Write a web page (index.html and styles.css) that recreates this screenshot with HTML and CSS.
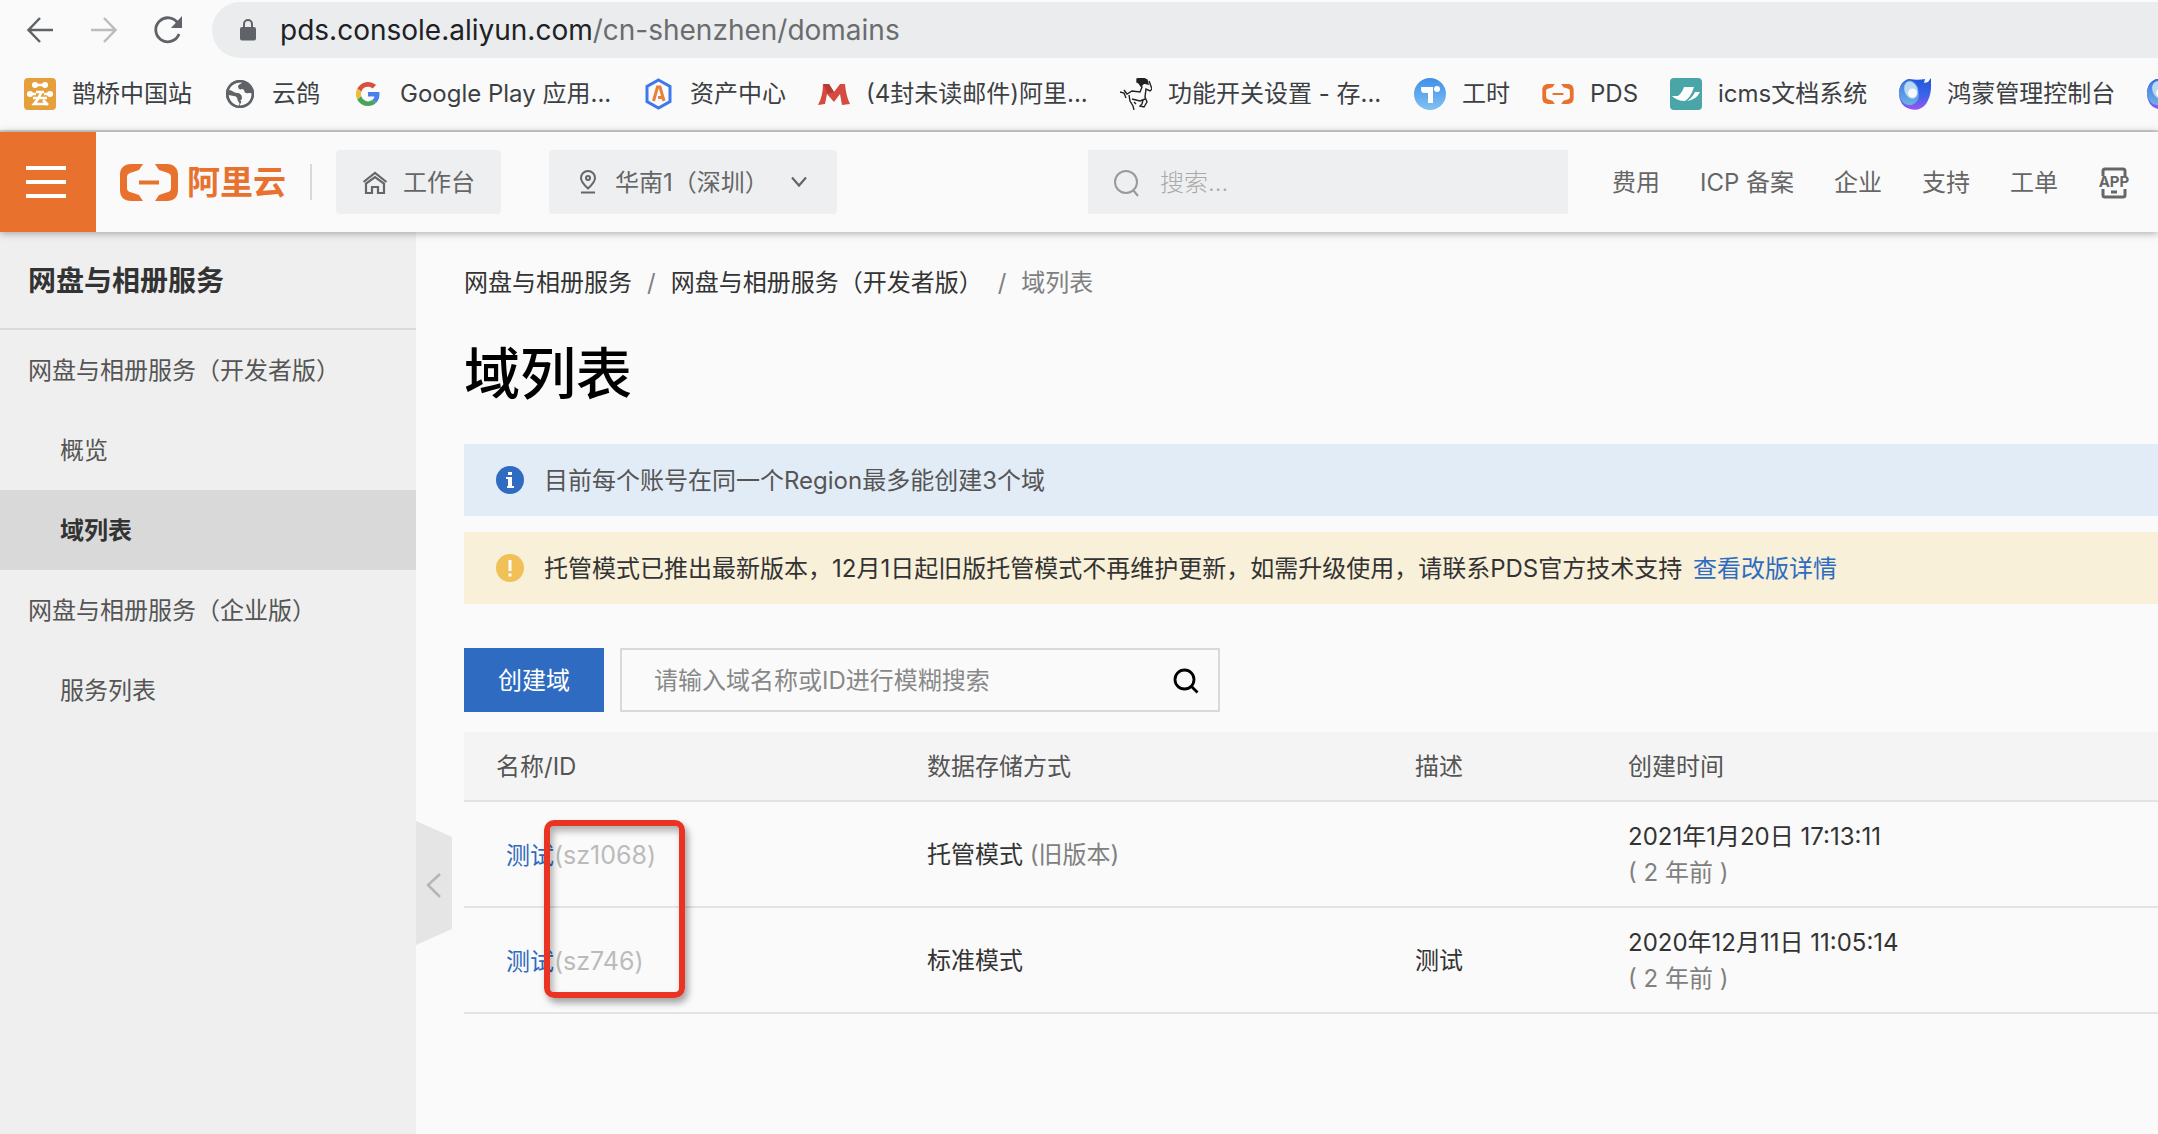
FILE: index.html
```html
<!DOCTYPE html>
<html lang="zh-CN">
<head>
<meta charset="utf-8">
<title>域列表</title>
<link rel="stylesheet" href="styles.css">
</head>
<body>
<svg class="defs" aria-hidden="true">
  <defs>
    <linearGradient id="drop-body" x1="0" y1="0" x2="0" y2="1">
      <stop offset="0" stop-color="#1f57dc"/><stop offset=".55" stop-color="#3f62ea"/><stop offset="1" stop-color="#9a55f3"/>
    </linearGradient>
    <linearGradient id="drop-ring" x1="0" y1="0" x2="0" y2="1">
      <stop offset="0" stop-color="#3f78e4"/><stop offset="1" stop-color="#6cb2e4"/>
    </linearGradient>
    <linearGradient id="teambition" x1="0" y1="0" x2="0" y2="1">
      <stop offset="0" stop-color="#3f8fe8"/><stop offset="1" stop-color="#82c2f3"/>
    </linearGradient>
    <symbol id="bracket" viewBox="0 0 58 37">
      <path d="M23 0H11C4 0 0 4 0 11v15c0 7 4 11 11 11h12l-4-6-9-3q-3-1-3-4V13q0-3 3-4l9-3zM35 0h12c7 0 11 4 11 11v15c0 7-4 11-11 11H35l4-6 9-3q3-1 3-4V13q0-3-3-4l-9-3zM19 16.500h20v4H19z" fill="#e8712e"/>
    </symbol>
    <symbol id="drop" viewBox="0 0 32 32">
      <path d="M10 1c6 1 11 1 16 0l-1 4 4-1 3-4c1 12-1 20-5 26-4 5-10 7-16 5C3 29 0 22 0 15 0 8 4 2 10 1z" fill="url(#drop-body)"/>
      <path d="M9 2C3 4 0 10 0 16c1 6 4 10 9 11 6 1 11-4 11-10C20 8 16 2 9 2z" fill="url(#drop-ring)"/>
      <ellipse cx="12" cy="12" rx="6.500" ry="9" transform="rotate(-20 12 12)" fill="#b9d9f3"/>
      <circle cx="13.500" cy="15" r="4.500" fill="#f7fbff"/>
    </symbol>
  </defs>
</svg>

<div class="browser">
  <div class="toolbar">
    <button class="tool" aria-label="后退"><svg width="28" height="28" viewBox="0 0 28 28" fill="none" stroke="#5f6368" stroke-width="2.500"><path d="M27 14H3M14 2 2.500 14 14 26"/></svg></button>
    <button class="tool" aria-label="前进"><svg width="28" height="28" viewBox="0 0 28 28" fill="none" stroke="#babcbe" stroke-width="2.500"><path d="M1 14h24M14 2l11.500 12L14 26"/></svg></button>
    <button class="tool" aria-label="重新加载"><svg width="28" height="28" viewBox="0 0 28 28"><path d="M24 7.500A12 12 0 1 0 25 18" fill="none" stroke="#5f6368" stroke-width="2.800"/><path d="M28 0v12H17z" fill="#5f6368"/></svg></button>
    <div class="address">
      <svg width="16" height="22" viewBox="0 0 16 22"><rect y="8" width="16" height="13.500" rx="2" fill="#5f6368"/><path d="M4 9V5a4 4 0 0 1 8 0v4" fill="none" stroke="#5f6368" stroke-width="2"/></svg>
      <span class="url"><span class="host">pds.console.aliyun.com</span>/cn-shenzhen/domains</span>
    </div>
  </div>
  <nav class="bookmarks" aria-label="书签">
    <a href="#"><svg width="32" height="32" viewBox="0 0 32 32"><rect width="32" height="32" rx="4" fill="#e5a03c"/><g fill="#fff"><circle cx="11" cy="7" r="3"/><circle cx="21" cy="7" r="3"/><circle cx="6" cy="16" r="3"/><circle cx="26" cy="16" r="3"/></g><g stroke="#fff" stroke-width="2.600" fill="none"><path d="M11 7h10M3 16h9M20 16h9M9 20h14M12 14h8M17 15l-3 6-4 5h12M19 22l5 5"/></g></svg><span>鹊桥中国站</span></a>
    <a href="#"><svg width="32" height="32" viewBox="0 0 32 32"><circle cx="16" cy="16" r="14" fill="#5f6368"/><path d="M19 4c-2 2-4 2-5 4 0 3 2 4 4 3 3 0 2 4 4 4 3 1 5-1 6 1 0 4-2 8-6 10l-6 2c-1-2 2-3 1-5-1-1-4-1-4-3 0-3-2-3-5-4l-4-1C4 9 10 4 19 4z" fill="#fafafa"/><path d="M21 6c2 1 3 3 2 5l3 3 3-1c-1-4-4-7-8-9zM5 12c3 0 5 3 8 3s5 2 5 5-3 2-4 4l1 5C8 28 4 22 3 17z" fill="#5f6368"/><path d="M4.500 17l5 1c3 0 4 2 4 4 0 1 2 2 2 4l-1 2.500A13 13 0 0 1 4.500 17z" fill="#fafafa"/><circle cx="16" cy="16" r="12.800" fill="none" stroke="#5f6368" stroke-width="2.500"/></svg><span>云鸽</span></a>
    <a href="#"><svg width="32" height="32" viewBox="-8 -8 64 64"><path fill="#d8503f" d="M24 9.500c3.500 0 6.700 1.200 9.200 3.600l6.900-6.900A24 24 0 0 0 2.600 13.200l8 6.200A14.300 14.300 0 0 1 24 9.500z"/><path fill="#4a80ea" d="M47 24.500c0-1.600-.2-3.100-.4-4.500H24v9h12.900a11 11 0 0 1-4.700 7.200l7.700 6c4.500-4.200 7.100-10.400 7.100-17.700z"/><path fill="#efbb3a" d="M10.500 28.600a14.500 14.500 0 0 1 0-9.200l-8-6.200a24 24 0 0 0 0 21.600z"/><path fill="#4ba558" d="M24 48c6.500 0 11.900-2.100 15.900-5.800l-7.700-6a14.300 14.300 0 0 1-21.700-7.600l-8 6.200A24 24 0 0 0 24 48z"/></svg><span class="label-s">Google Play 应用...</span></a>
    <a href="#"><svg width="32" height="32" viewBox="0 0 32 32" fill="none"><path d="M16.500 2 28 8.500v15L16.500 30 5 23.500v-15z" stroke="#3f78ec" stroke-width="3"/><path d="M11.500 23 15.500 9h2.500l4 14M16 19.500h5" stroke="#e8803c" stroke-width="3"/></svg><span>资产中心</span></a>
    <a href="#"><svg width="32" height="32" viewBox="0 0 32 32"><path d="M5 6h6l5 8 6-8h5q1 12 5 20l-8 1-2-11-6 8-7-8-2 10-7 1Q5 18 5 6z" fill="#d44c41"/><path d="M5 6h6l5 8-6 2z" fill="#b93c34"/></svg><span class="label-l">(4封未读邮件)阿里...</span></a>
    <a href="#"><svg width="32" height="32" viewBox="0 0 32 32" fill="none" stroke="#222" stroke-width="1.400"><path d="M0 14l4 1 2 5M4 12l3 4 5-3 8 1 2-5-2-3M29 3l3 8-2 2-4-2-1 8 2 5-3 5-4-1 2-2 1-4M9 17l1 6 3 5 1 4M12 21l8 2 5-2M14 24l2 2"/><path d="M17 1l6-1 4 2 1 4-4-1-3 3-2-3-2-1z" fill="#222"/></svg><span class="label-m">功能开关设置 - 存...</span></a>
    <a href="#"><svg width="32" height="32" viewBox="0 0 32 32"><circle cx="16" cy="16" r="16" fill="url(#teambition)"/><path d="M7 9h12v16h-5V15H10q-3 0-3-4z" fill="#fff"/><circle cx="23" cy="11" r="3" fill="#fff"/></svg><span>工时</span></a>
    <a href="#"><svg width="32" height="20"><use href="#bracket"/></svg><span>PDS</span></a>
    <a href="#"><svg width="32" height="32" viewBox="0 0 32 32"><rect width="32" height="32" rx="4" fill="#4aa5a8"/><path d="M14 9h10q-3 10-9 14-8 0-13-5h6q4-3 6-9zM25 14h5q-4 8-13 9 5-3 8-9z" fill="#fff"/><path d="M25 10q-3 9-9 13" stroke="#4aa5a8" fill="none"/></svg><span>icms文档系统</span></a>
    <a href="#"><svg width="32" height="32"><use href="#drop"/></svg><span>鸿蒙管理控制台</span></a>
    <a href="#" aria-label="更多书签"><svg width="32" height="32"><use href="#drop"/></svg></a>
  </nav>
</div>

<header class="header">
  <button class="menu" aria-label="菜单"><i></i><i></i><i></i></button>
  <a class="logo" href="#"><svg width="58" height="37"><use href="#bracket"/></svg><span>阿里云</span></a>
  <i class="divider"></i>
  <button class="workbench"><svg width="26" height="24" viewBox="0 0 26 24" fill="none" stroke="#666" stroke-width="2.200"><path d="M1.500 11 13 2l11.500 9"/><path d="M4 12.500V22h6v-6h6v6h6v-9.500L13 6z"/></svg>工作台</button>
  <div class="region">
    <svg class="pin" width="18" height="24" viewBox="0 0 18 24" fill="none" stroke="#666" stroke-width="2"><path d="M9 18.500C4 14 2 11 2 8a7 7 0 0 1 14 0c0 3-2 6-7 10.500z"/><circle cx="9" cy="8" r="2"/><path d="M2 22.500h14"/></svg>
    <select aria-label="地域"><option>华南1（深圳）</option></select>
    <svg class="chevron" width="16" height="12" viewBox="0 0 16 12" fill="none" stroke="#666" stroke-width="2.200"><path d="M1 1.500l7 8 7-8"/></svg>
  </div>
  <div class="search">
    <svg width="26" height="28" viewBox="0 0 26 28" fill="none" stroke="#999" stroke-width="2"><circle cx="12" cy="13" r="11"/><path d="M19 21l5 6"/></svg>
    <input type="search" aria-label="搜索" placeholder="搜索...">
  </div>
  <nav class="links" aria-label="导航">
    <a href="#">费用</a><a href="#">ICP 备案</a><a href="#">企业</a><a href="#">支持</a><a href="#">工单</a>
    <a href="#" aria-label="APP"><svg width="32" height="32" viewBox="0 0 32 32" fill="none" stroke="#666" stroke-width="3"><path d="M5 9V4q0-2 2-2h18q2 0 2 2v5M5 22v6q0 2 2 2h18q2 0 2-2v-6M13 25h6"/><text x="16" y="20" class="app">APP</text></svg></a>
  </nav>
</header>

<div class="layout">
  <aside class="sidebar">
    <h2>网盘与相册服务</h2>
    <nav aria-label="服务">
      <a href="#">网盘与相册服务（开发者版）</a>
      <a class="sub" href="#">概览</a>
      <a class="sub active" href="#">域列表</a>
      <a href="#">网盘与相册服务（企业版）</a>
      <a class="sub" href="#">服务列表</a>
    </nav>
    <button class="collapse" aria-label="收起"><svg width="36" height="124" viewBox="0 0 36 124"><path d="M0 0 36 16v92L0 124z" fill="#e5e5e5"/><path d="M24 53 12 64l12 12" fill="none" stroke="#b5b5b5" stroke-width="2.500"/></svg></button>
  </aside>

  <main class="main">
    <nav class="crumbs" aria-label="路径"><a href="#">网盘与相册服务</a><i>/</i><a href="#">网盘与相册服务（开发者版）</a><i>/</i><span>域列表</span></nav>
    <h1>域列表</h1>
    <p class="notice info"><svg width="28" height="28" viewBox="0 0 28 28"><circle cx="14" cy="14" r="14" fill="#2f6bc0"/><path d="M12 6h4v3h-4zM10 11h6v9h2v2h-7v-2h1v-7h-2z" fill="#fff"/></svg><span>目前每个账号在同一个Region最多能创建3个域</span></p>
    <p class="notice warn"><svg width="28" height="28" viewBox="0 0 28 28"><circle cx="14" cy="14" r="14" fill="#f1c057"/><path d="M12.500 6h3v11h-3zM12.500 19.500h3v3h-3z" fill="#fff"/></svg><span>托管模式已推出最新版本，12月1日起旧版托管模式不再维护更新，如需升级使用，请联系PDS官方技术支持 <a href="#">查看改版详情</a></span></p>

    <div class="actions">
      <button class="primary">创建域</button>
      <div class="filter">
        <input type="text" aria-label="域名称或ID" placeholder="请输入域名称或ID进行模糊搜索">
        <button aria-label="搜索"><svg width="26" height="26" viewBox="0 0 26 26" fill="none" stroke="#000" stroke-width="2.800"><circle cx="11.500" cy="11.500" r="9.500"/><path d="M18 18l6.500 6.500"/></svg></button>
      </div>
    </div>

    <div class="table-wrap">
      <table>
        <colgroup><col class="c-name"><col class="c-mode"><col class="c-desc"><col></colgroup>
        <thead><tr><th>名称/ID</th><th>数据存储方式</th><th>描述</th><th>创建时间</th></tr></thead>
        <tbody>
          <tr><td class="name"><a href="#">测试</a><span>(sz1068)</span></td><td>托管模式 <small>(旧版本)</small></td><td></td><td>2021年1月20日 17:13:11<br><small>( 2 年前 )</small></td></tr>
          <tr><td class="name"><a href="#">测试</a><span>(sz746)</span></td><td>标准模式</td><td>测试</td><td>2020年12月11日 11:05:14<br><small>( 2 年前 )</small></td></tr>
        </tbody>
      </table>
      <div class="marker"></div>
    </div>
  </main>
</div>
</body>
</html>
```

FILE: styles.css
```css
* { box-sizing: border-box; }

body {
  margin: 0;
  min-height: 100vh;
  display: flex;
  flex-direction: column;
  overflow-x: hidden;
  background: #fafafa;
  color: #333;
  font: 24px/36px Inter, "Noto Sans CJK SC", sans-serif;
}

a { color: inherit; text-decoration: none; }
button, input, select { font: inherit; color: inherit; border: 0; border-radius: 0; background: none; padding: 0; margin: 0; outline: 0; }
svg { flex: none; display: block; }
i { font-style: normal; }
small { font-size: inherit; color: #808080; }
.defs { position: absolute; width: 0; height: 0; }

/* Browser chrome */
.browser { border-bottom: 2px solid #d3d3d4; }
.toolbar { display: flex; align-items: center; padding: 2px 0 0 26px; }
.tool { margin-right: 36px; }
.tool:nth-child(3) { margin-right: 30px; }
.address {
  flex: 1;
  display: flex;
  align-items: center;
  gap: 24px;
  height: 56px;
  padding-left: 28px;
  border-radius: 28px 0 0 28px;
  background: #ebeced;
}
.url { font-size: 28px; color: #6a6c6f; white-space: nowrap; }
.host { color: #202124; }
.bookmarks { display: flex; gap: 32px; height: 72px; padding-left: 24px; overflow: hidden; color: #3c4043; }
.bookmarks a { display: flex; flex: none; align-items: center; gap: 16px; white-space: nowrap; }
.label-s { width: 210px; }
.label-m { width: 214px; }
.label-l { width: 222px; }

/* Console header */
.header {
  position: relative;
  z-index: 1;
  display: flex;
  align-items: center;
  height: 100px;
  padding-right: 28px;
  background: #fafafa;
  color: #666;
  box-shadow: 0 1px 8px rgba(0, 0, 0, .35);
}
.menu { display: flex; flex-direction: column; justify-content: center; gap: 10px; width: 96px; height: 100px; padding-left: 26px; background: #e8712e; }
.menu i { width: 40px; height: 4px; background: #fff; }
.logo { display: flex; align-items: center; gap: 9px; margin-left: 24px; color: #e8712e; font-size: 33px; font-weight: 700; white-space: nowrap; }
.divider { width: 2px; height: 36px; margin: 0 24px; background: #d8d9da; }
.workbench { display: flex; align-items: center; gap: 15px; height: 64px; padding: 1px 26px 0; border-radius: 4px; background: #eeeff0; white-space: nowrap; }
.region { position: relative; width: 288px; height: 64px; margin-left: 48px; border-radius: 4px; background: #eeeff0; }
.region select { width: 100%; height: 100%; padding: 2px 0 0 66px; appearance: none; }
.pin, .chevron { position: absolute; top: 20px; pointer-events: none; }
.pin { left: 30px; }
.chevron { top: 26px; right: 30px; }
.search { display: flex; align-items: center; gap: 20px; width: 480px; height: 64px; margin-left: auto; padding: 2px 0 0 26px; background: #eeeff1; }
.search input { flex: 1; min-width: 0; font-weight: 300; }
.search input::placeholder { color: #aaa; opacity: 1; }
.links { display: flex; align-items: center; gap: 40px; margin-left: 44px; padding-top: 2px; white-space: nowrap; }
.app { font: 700 15px Inter, sans-serif; text-anchor: middle; fill: #666; stroke: none; }

/* Side navigation */
.layout { flex: 1; display: flex; }
.sidebar { position: relative; flex: none; width: 416px; background: #efefef; color: #555; }
.sidebar h2 { margin: 0; height: 98px; padding-left: 28px; border-bottom: 2px solid #d9d9d9; color: #333; font-size: 28px; line-height: 98px; font-weight: 700; }
.sidebar nav a { display: block; padding: 2px 0 0 28px; line-height: 78px; white-space: nowrap; }
.sidebar nav .sub { padding-left: 60px; }
.sidebar nav .active { background: #d9d9d9; color: #333; font-weight: 700; }
.collapse { position: absolute; left: 100%; top: 589px; }

/* Page content */
.main { flex: 1; min-width: 0; padding: 33px 0 0 48px; }
.crumbs { display: flex; gap: 15px; white-space: nowrap; }
.crumbs i, .crumbs span { color: #808080; }
h1 { margin: 37px 0 34px; color: #000; font-size: 56px; line-height: 72px; font-weight: 500; }
.notice { display: flex; align-items: center; gap: 20px; height: 72px; margin: 0 0 16px; padding-left: 32px; white-space: nowrap; }
.notice span { padding-top: 2px; }
.info { background: #e2ecf7; color: #555; }
.warn { background: #f8f0d9; }
.notice a, .name a { color: #2f6bc0; }
.notice a { margin-left: 4px; }
.actions { display: flex; gap: 16px; margin: 44px 0 20px; }
.primary { width: 140px; height: 64px; padding-top: 2px; background: #2f6bc0; color: #fff; }
.filter { display: flex; align-items: center; width: 600px; height: 64px; padding: 2px 19px 0 32px; border: 2px solid #d9d9d9; }
.filter input { flex: 1; min-width: 0; }
.filter input::placeholder { color: #888; opacity: 1; }

.table-wrap { position: relative; }
table { width: 100%; border-collapse: separate; border-spacing: 0; table-layout: fixed; }
.c-name { width: 431px; }
.c-mode { width: 488px; }
.c-desc { width: 213px; }
th, td { padding: 17px 0 15px 32px; border-bottom: 2px solid #e3e3e3; text-align: left; white-space: nowrap; }
th { background: #f4f4f4; color: #555; font-weight: 400; }
.name { padding-left: 42px; }
.name span { color: #bbb; font-size: 25px; }
.marker {
  position: absolute;
  left: 80px;
  top: 88px;
  width: 141px;
  height: 178px;
  border: 6px solid #eb3323;
  border-radius: 10px;
  box-shadow: 3px 5px 7px rgba(0, 0, 0, .35), inset 3px 5px 7px rgba(0, 0, 0, .3);
}
```
